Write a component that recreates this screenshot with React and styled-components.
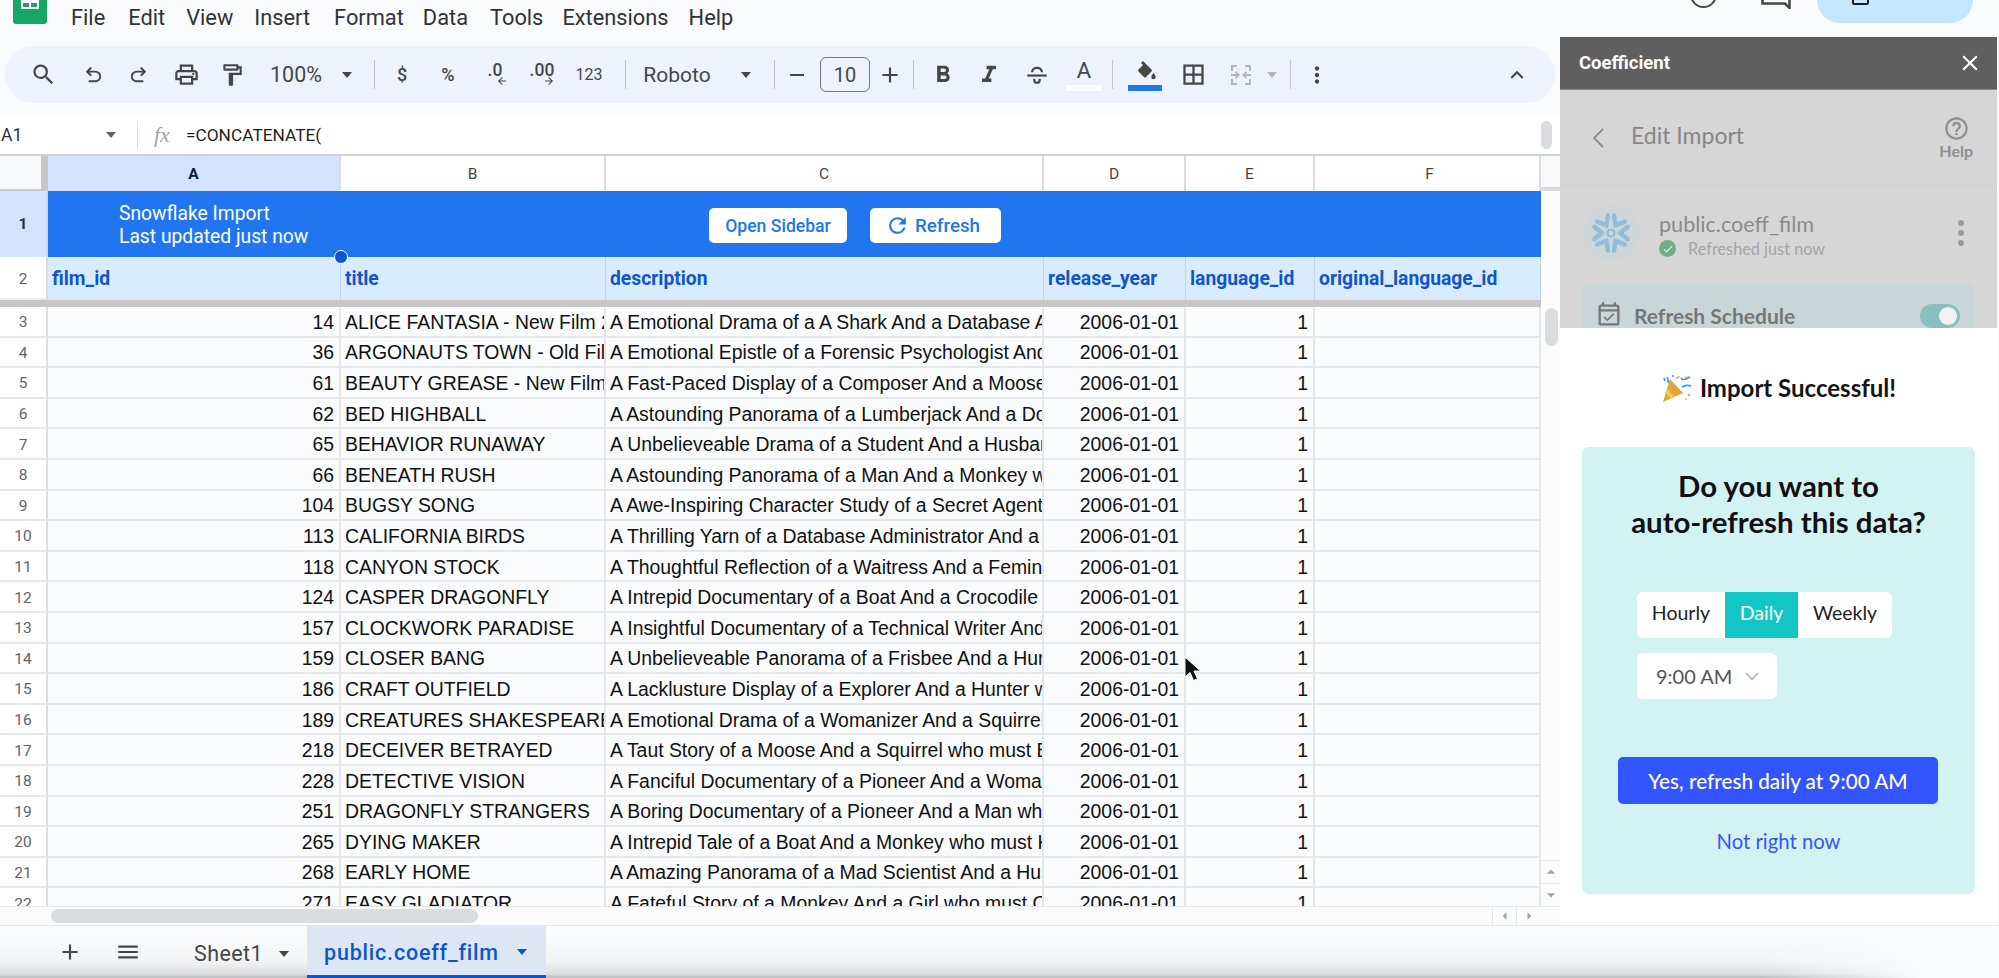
import React from 'react';
import styled, { createGlobalStyle } from 'styled-components';
import {
  MdSearch, MdOutlinePrint, MdOutlineFormatPaint, MdFormatBold, MdFormatItalic,
  MdBorderAll, MdMoreVert, MdKeyboardArrowUp, MdAdd, MdRemove, MdMenu, MdClose,
  MdRefresh, MdArrowDropDown, MdArrowDropUp, MdArrowLeft, MdArrowRight, MdOutlineHelpOutline,
  MdArrowForward, MdArrowBack, MdCheck, MdOutlineEventAvailable,
} from 'react-icons/md';

const GlobalStyle = createGlobalStyle`
  html, body { margin: 0; padding: 0; background: #f9fbfd; }
  * { box-sizing: border-box; }
`;

const rows = [
  [3, 14, 'ALICE FANTASIA - New Film 2006', 'A Emotional Drama of a A Shark And a Database Administrator who must'],
  [4, 36, 'ARGONAUTS TOWN - Old Film 2006', 'A Emotional Epistle of a Forensic Psychologist And a Butler who must'],
  [5, 61, 'BEAUTY GREASE - New Film 2006', 'A Fast-Paced Display of a Composer And a Moose who must Sink a Robot'],
  [6, 62, 'BED HIGHBALL', 'A Astounding Panorama of a Lumberjack And a Dog who must Redeem a'],
  [7, 65, 'BEHAVIOR RUNAWAY', 'A Unbelieveable Drama of a Student And a Husband who must Outrace a'],
  [8, 66, 'BENEATH RUSH', 'A Astounding Panorama of a Man And a Monkey who must Discover a'],
  [9, 104, 'BUGSY SONG', 'A Awe-Inspiring Character Study of a Secret Agent And a Boat who'],
  [10, 113, 'CALIFORNIA BIRDS', 'A Thrilling Yarn of a Database Administrator And a Robot who must'],
  [11, 118, 'CANYON STOCK', 'A Thoughtful Reflection of a Waitress And a Feminist who must Escape'],
  [12, 124, 'CASPER DRAGONFLY', 'A Intrepid Documentary of a Boat And a Crocodile who must Chase a'],
  [13, 157, 'CLOCKWORK PARADISE', 'A Insightful Documentary of a Technical Writer And a Feminist who'],
  [14, 159, 'CLOSER BANG', 'A Unbelieveable Panorama of a Frisbee And a Hunter who must Vanquish'],
  [15, 186, 'CRAFT OUTFIELD', 'A Lacklusture Display of a Explorer And a Hunter who must Succumb'],
  [16, 189, 'CREATURES SHAKESPEARE', 'A Emotional Drama of a Womanizer And a Squirrel who must Vanquish'],
  [17, 218, 'DECEIVER BETRAYED', 'A Taut Story of a Moose And a Squirrel who must Build a Husband'],
  [18, 228, 'DETECTIVE VISION', 'A Fanciful Documentary of a Pioneer And a Woman who must Redeem'],
  [19, 251, 'DRAGONFLY STRANGERS', 'A Boring Documentary of a Pioneer And a Man who must Vanquish'],
  [20, 265, 'DYING MAKER', 'A Intrepid Tale of a Boat And a Monkey who must Kill a Cat in'],
  [21, 268, 'EARLY HOME', 'A Amazing Panorama of a Mad Scientist And a Husband who must Meet'],
  [22, 271, 'EASY GLADIATOR', 'A Fateful Story of a Monkey And a Girl who must Overcome a Pastry'],
];

const columnLetters = ['A', 'B', 'C', 'D', 'E', 'F'];
const gridColumns = '48px 293px 265px 438px 142px 129px 226px';

const Page = styled.div`
  position: relative;
  width: 1999px;
  height: 978px;
  overflow: hidden;
  background: #f9fbfd;
  display: flex;
  flex-direction: column;
  font-family: Roboto, "Liberation Sans", sans-serif;
  color: #1f1f1f;
`;

const MenuBar = styled.div`
  height: 37px;
  flex: none;
  display: flex;
  align-items: flex-start;
  padding-left: 13px;
`;
const Logo = styled.svg`
  width: 34px;
  height: 24px;
  flex: none;
`;
const MenuList = styled.div`
  display: flex;
  margin-left: 24px;
  padding-top: 5px;
`;
const MenuItem = styled.span`
  font-size: 21.8px;
  line-height: 25px;
  color: #303336;
  margin-right: ${p => p.$mr}px;
`;
const TopRight = styled.div`
  margin-left: auto;
  display: flex;
  align-items: flex-start;
  height: 23px;
  padding-right: 26px;
`;
const ClippedRound = styled.div`
  width: 27px;
  height: 27px;
  margin-top: -19px;
  margin-right: 44px;
  border: 2.5px solid #444746;
  border-radius: 50%;
`;
const ClippedBubble = styled.svg`
  width: 30px;
  height: 9px;
  margin-right: 26px;
`;
const ShareButton = styled.div`
  width: 156px;
  height: 23px;
  border-radius: 0 0 24px 24px;
  background: #c2e7ff;
  overflow: hidden;
  display: flex;
  justify-content: center;
  font-size: 20px;
  font-weight: 500;
  line-height: 24px;
`;
const ShareInner = styled.div`
  display: flex;
  align-items: flex-end;
  gap: 18px;
  height: 24px;
  margin-top: -21px;
`;
const LockStub = styled.div`
  width: 17px;
  height: 16px;
  margin-bottom: -2px;
  border: 2.5px solid #1f1f1f;
  border-radius: 2px;
`;

const Main = styled.div`
  flex: 1;
  min-height: 0;
  display: flex;
`;
const LeftColumn = styled.div`
  width: 1560px;
  flex: none;
  display: flex;
  flex-direction: column;
  padding-top: 9px;
`;

const Toolbar = styled.div`
  height: 57px;
  flex: none;
  margin: 0 5px;
  padding: 0 20px 0 19px;
  border-radius: 29px;
  background: #edf2fc;
  display: flex;
  align-items: center;
  color: #444746;
`;
const Tool = styled.div`
  width: ${p => p.$w || 36}px;
  height: 36px;
  flex: none;
  margin-left: ${p => (p.$end ? 'auto' : `${p.$ml || 0}px`)};
  display: flex;
  flex-direction: column;
  align-items: center;
  justify-content: center;
  white-space: nowrap;
  font-size: ${p => p.$fs || 17}px;
  color: ${p => p.$color || '#444746'};
  font-weight: ${p => p.$fw || 400};
`;
const Divider = styled.div`
  width: 1px;
  height: 29px;
  flex: none;
  margin-left: ${p => p.$ml}px;
  background: #c7c7c7;
`;
const Caret = styled.div`
  width: 12px;
  height: 12px;
  flex: none;
  margin-left: ${p => p.$ml}px;
  display: flex;
  align-items: center;
  justify-content: center;
  &::before {
    content: '';
    border-left: 5px solid transparent;
    border-right: 5px solid transparent;
    border-top: 6px solid ${p => p.$color || '#444746'};
  }
`;
const SizeBox = styled.div`
  width: 50px;
  height: 35px;
  flex: none;
  margin-left: ${p => p.$ml}px;
  border: 1.5px solid #747775;
  border-radius: 6px;
  display: flex;
  align-items: center;
  justify-content: center;
  font-size: 20px;
  color: #444746;
`;
const DecimalWrap = styled.div`
  display: flex;
  flex-direction: column;
  align-items: center;
  line-height: 15px;
  font-size: 17.5px;
  font-weight: 500;
`;
const DecimalArrow = styled.div`
  height: 10px;
  margin-top: -2px;
  margin-left: 14px;
  display: flex;
  align-items: center;
`;
const Swatch = styled.div`
  width: 34px;
  height: 6px;
  margin-top: 2px;
  background: ${p => p.$color};
`;
const ToolIconStack = styled.div`
  height: 24px;
  display: flex;
  align-items: center;
`;
const LetterA = styled.span`
  font-size: 22px;
  line-height: 24px;
`;

const FormulaBar = styled.div`
  margin-top: 12px;
  height: 41px;
  flex: none;
  background: #fff;
  border-bottom: 2px solid #d0d2d4;
  display: flex;
  align-items: center;
  padding-right: 8px;
`;
const NameBox = styled.div`
  width: 105px;
  padding-left: 1px;
  font-size: 17.5px;
  color: #303336;
  flex: none;
`;
const FormulaSep = styled.div`
  width: 1px;
  height: 27px;
  margin-left: 20px;
  background: #dadce0;
`;
const FxLabel = styled.span`
  width: 48px;
  padding-left: 16px;
  font-family: "Liberation Serif", serif;
  font-style: italic;
  font-size: 22px;
  color: #a0a3a6;
  flex: none;
`;
const FormulaText = styled.span`
  font-size: 17.3px;
  color: #1f1f1f;
`;
const FormulaThumb = styled.div`
  margin-left: auto;
  width: 11px;
  height: 28px;
  border-radius: 6px;
  background: #dadce0;
`;

const SheetWrap = styled.div`
  flex: 1;
  min-height: 0;
  display: flex;
  border-right: 2px solid #e3e5e7;
`;
const Sheet = styled.div`
  width: 1541px;
  flex: none;
  display: flex;
  flex-direction: column;
`;
const GridRow = styled.div`
  display: grid;
  grid-template-columns: ${gridColumns};
  height: ${p => p.$h}px;
  flex: none;
`;
const Corner = styled.div`
  background: #f8f9fa;
  border-right: 7px solid #c7c7c7;
  border-bottom: 2px solid #c7c7c7;
`;
const ColHead = styled.div`
  display: flex;
  align-items: center;
  justify-content: center;
  font-size: 15.5px;
  background: ${p => (p.$active ? '#d3e3fd' : '#fff')};
  color: ${p => (p.$active ? '#0b1f3f' : '#444746')};
  font-weight: ${p => (p.$active ? 700 : 400)};
  border-right: 2px solid #dadce0;
  &:last-child { padding-left: 5px; }
`;
const RowHead = styled.div`
  display: flex;
  align-items: center;
  justify-content: center;
  padding-top: 2px;
  font-size: 15.5px;
  color: #5f6368;
  background: #fff;
  border-right: 2px solid #dadce0;
  border-bottom: 2px solid #e6e7e8;
`;
const BannerRow = styled.div`
  height: 66px;
  flex: none;
  display: flex;
  position: relative;
`;
const BannerHead = styled.div`
  width: 48px;
  flex: none;
  display: flex;
  align-items: center;
  justify-content: center;
  font-size: 15.5px;
  font-weight: 700;
  color: #1f2f45;
  background: #d3e3fd;
  border-right: 2px solid #c9d9f2;
`;
const BannerTitle = styled.div`
  width: 293px;
  flex: none;
  background: #2176f0;
  padding: 11px 0 0 71px;
  color: #fff;
  font-size: 19.3px;
  line-height: 23px;
  white-space: nowrap;
`;
const BannerActions = styled.div`
  flex: 1;
  background: #2176f0;
  display: flex;
  align-items: flex-start;
  padding: 17px 0 0 368px;
  gap: 23px;
`;
const BannerButton = styled.div`
  width: ${p => p.$w}px;
  height: 35px;
  padding-right: ${p => p.$pr || 0}px;
  border-radius: 5px;
  background: #fff;
  color: #2176f0;
  font-size: ${p => p.$fs}px;
  font-weight: 500;
  display: flex;
  align-items: center;
  justify-content: center;
  gap: 5px;
`;
const SelectDot = styled.div`
  position: absolute;
  left: 334px;
  top: 59px;
  width: 14px;
  height: 14px;
  border-radius: 50%;
  background: #0b57d0;
  border: 1.5px solid #fff;
`;
const HeaderCell = styled.div`
  background: #d9ecfd;
  color: #1155cc;
  font-size: 19.3px;
  font-weight: 700;
  padding-left: 4px;
  display: flex;
  align-items: center;
  border-right: 1.5px solid #bfd7ec;
  white-space: nowrap;
  overflow: hidden;
`;
const FreezeBar = styled.div`
  height: 7px;
  flex: none;
  background: #c7c7c7;
`;
const RowsClip = styled.div`
  flex: 1;
  min-height: 0;
  overflow: hidden;
`;
const Cell = styled.div`
  font-family: "Liberation Sans", Arial, sans-serif;
  font-size: 19.4px;
  color: #111;
  white-space: nowrap;
  overflow: hidden;
  display: flex;
  align-items: center;
  justify-content: ${p => (p.$right ? 'flex-end' : 'flex-start')};
  padding: ${p => (p.$right ? '2px 5px 0 0' : '2px 0 0 4px')};
  border-right: 2px solid #e6e7e8;
  border-bottom: 2px solid #e6e7e8;
`;
const HScroll = styled.div`
  height: 19px;
  flex: none;
  background: #fcfcfd;
  border-top: 1px solid #e3e5e7;
  display: flex;
  align-items: center;
  padding-left: 51px;
`;
const HThumb = styled.div`
  width: 427px;
  height: 14px;
  border-radius: 7px;
  background: #dadce0;
`;
const HArrows = styled.div`
  margin-left: auto;
  margin-right: 1px;
  display: flex;
  height: 100%;
  color: #a0a3a6;
`;
const ScrollBtn = styled.div`
  width: 24px;
  display: flex;
  align-items: center;
  justify-content: center;
  border-left: 1px solid #e3e5e7;
`;
const VScroll = styled.div`
  flex: 1;
  display: flex;
  flex-direction: column;
  align-items: center;
  background: #fcfcfd;
  color: #a0a3a6;
`;
const VHead = styled.div`
  height: 35px;
  width: 100%;
  flex: none;
  background: #f8f9fa;
  border-bottom: 4px solid #d8dadc;
`;
const VThumb = styled.div`
  width: 13px;
  height: 38px;
  margin-top: 117px;
  flex: none;
  border-radius: 7px;
  background: #dadce0;
`;
const VArrow = styled.div`
  width: 100%;
  height: 23px;
  flex: none;
  display: flex;
  align-items: center;
  justify-content: center;
  border-top: 1px solid #e3e5e7;
  margin-top: ${p => (p.$auto ? 'auto' : '0')};
`;
const VFoot = styled.div`
  height: 19px;
  width: 100%;
  flex: none;
  border-top: 1px solid #e3e5e7;
`;

const Panel = styled.div`
  width: 437px;
  flex: none;
  display: flex;
  flex-direction: column;
  background: #fff;
`;
const PanelHeader = styled.div`
  height: 53px;
  flex: none;
  background: #5f5f5f;
  border-bottom: 1px solid #888;
  display: flex;
  align-items: center;
  justify-content: space-between;
  padding: 0 14px 0 19px;
  color: #fff;
  font-size: 18.5px;
  font-weight: 700;
`;
const DimmedArea = styled.div`
  height: 238px;
  flex: none;
  overflow: hidden;
  background: #d6d6d6;
  font-family: Lato, "Open Sans", sans-serif;
  color: #888;
`;
const EditRow = styled.div`
  height: 96px;
  display: flex;
  align-items: center;
  padding: 0 24px 0 32px;
  border-bottom: 1px dotted #c9c9c9;
`;
const EditTitle = styled.span`
  margin-left: 27px;
  margin-top: -6px;
  font-size: 23px;
  color: #868686;
`;
const HelpBox = styled.div`
  margin-left: auto;
  display: flex;
  flex-direction: column;
  align-items: center;
  font-size: 16px;
  font-weight: 700;
  color: #8f8f8f;
  line-height: 18px;
`;
const SourceRow = styled.div`
  height: 90px;
  display: flex;
  align-items: center;
  padding: 3px 33px 0 23px;
`;
const Avatar = styled.div`
  width: 56px;
  height: 56px;
  border-radius: 50%;
  background: #cfd6d9;
  display: flex;
  align-items: center;
  justify-content: center;
  flex: none;
`;
const SourceText = styled.div`
  margin-left: 20px;
  margin-top: 5px;
  display: flex;
  flex-direction: column;
`;
const SourceName = styled.span`
  font-size: 21.6px;
  line-height: 27px;
  color: #8a8a8a;
`;
const SourceStatus = styled.div`
  display: flex;
  align-items: center;
  gap: 12px;
  font-size: 16.3px;
  line-height: 21px;
  color: #a4a4a4;
`;
const StatusDot = styled.div`
  width: 17px;
  height: 17px;
  border-radius: 50%;
  background: #72ad88;
  color: #e6efe8;
  display: flex;
  align-items: center;
  justify-content: center;
`;
const DimDots = styled.div`
  margin-left: auto;
  display: flex;
  flex-direction: column;
  gap: 4px;
`;
const DimDot = styled.div`
  width: 6px;
  height: 6px;
  border-radius: 50%;
  background: #9a9a9a;
`;
const ScheduleCard = styled.div`
  margin: 8px 22px 0;
  height: 70px;
  border-radius: 8px;
  background: #c9d6d8;
  display: flex;
  align-items: flex-start;
  padding: 17px 15px 0 13px;
`;
const ScheduleLabel = styled.span`
  margin-left: 11px;
  margin-top: 2px;
  font-size: 21px;
  font-weight: 700;
  line-height: 25px;
  color: #777;
`;
const DimToggle = styled.div`
  margin-left: auto;
  margin-top: 3px;
  width: 40px;
  height: 24px;
  border-radius: 12px;
  background: #8abfc0;
  display: flex;
  align-items: center;
  justify-content: flex-end;
  padding-right: 3px;
`;
const DimKnob = styled.div`
  width: 18px;
  height: 18px;
  border-radius: 50%;
  background: #f2f2f2;
`;

const PanelBody = styled.div`
  flex: 1;
  min-height: 0;
  display: flex;
  flex-direction: column;
  align-items: center;
  font-family: Lato, "Open Sans", sans-serif;
`;
const SuccessTitle = styled.div`
  height: 119px;
  flex: none;
  display: flex;
  align-items: center;
  gap: 7px;
  font-size: 24px;
  font-weight: 700;
  color: #151515;
`;
const RefreshCard = styled.div`
  width: 393px;
  height: 447px;
  flex: none;
  border-radius: 7px;
  background: #d3f2f2;
  display: flex;
  flex-direction: column;
  align-items: center;
  padding-top: 21px;
`;
const CardHeading = styled.div`
  font-size: 29.4px;
  font-weight: 700;
  line-height: 36px;
  text-align: center;
  color: #111;
`;
const OptionsBlock = styled.div`
  align-self: flex-start;
  margin: 52px 0 0 55px;
  display: flex;
  flex-direction: column;
  gap: 15px;
`;
const Segments = styled.div`
  width: 255px;
  height: 46px;
  border-radius: 6px;
  background: #fff;
  overflow: hidden;
  display: grid;
  grid-template-columns: 88px 73px 94px;
`;
const Segment = styled.div`
  display: flex;
  align-items: center;
  justify-content: center;
  font-size: 19.5px;
  padding-bottom: 5px;
  color: ${p => (p.$active ? '#fff' : '#222')};
  background: ${p => (p.$active ? '#12c6c6' : 'transparent')};
`;
const TimeSelect = styled.div`
  width: 140px;
  height: 46px;
  border-radius: 6px;
  background: #fff;
  display: flex;
  align-items: center;
  padding-left: 19px;
  gap: 13px;
  font-size: 20px;
  color: #555;
`;
const PrimaryButton = styled.div`
  margin: 58px 0 0 36px;
  width: 320px;
  height: 47px;
  flex: none;
  align-self: flex-start;
  border-radius: 5px;
  background: #3355ff;
  color: #fff;
  font-size: 20.7px;
  font-weight: 500;
  display: flex;
  align-items: center;
  justify-content: center;
`;
const TextLink = styled.div`
  margin-top: 24px;
  font-size: 20.3px;
  line-height: 26px;
  color: #3355ff;
`;

const TabBar = styled.div`
  height: 53px;
  flex: none;
  border-top: 1px solid #e3e5e7;
  background:
    linear-gradient(to right, rgba(249, 251, 253, 0) 88%, #f9fbfd 96%),
    linear-gradient(#f9fbfd 25%, #f1f2f4 70%, #dcdddf 92%, #b9babc 100%);
  display: flex;
  align-items: stretch;
  color: #444746;
`;
const TabIcon = styled.div`
  width: 36px;
  flex: none;
  margin-left: ${p => p.$ml}px;
  display: flex;
  align-items: center;
  justify-content: center;
`;
const Tab = styled.div`
  display: flex;
  align-items: center;
  flex: none;
  width: ${p => p.$w}px;
  margin-left: ${p => p.$ml}px;
  padding-left: ${p => p.$pl}px;
  padding-top: 3px;
  font-size: 21.5px;
  letter-spacing: ${p => (p.$active ? '0.8px' : '0.4px')};
  font-weight: ${p => (p.$active ? 500 : 400)};
  color: ${p => (p.$active ? '#0b57d0' : '#444746')};
  background: ${p => (p.$active ? '#dce6f5' : 'transparent')};
  border-bottom: ${p => (p.$active ? '3px solid #0b57d0' : 'none')};
`;
const Pointer = styled.svg`
  position: absolute;
  left: 1184px;
  top: 656px;
  width: 18px;
  height: 28px;
`;

const LogoMark = () => (
  <Logo viewBox="0 0 34 24">
    <path d="M0 0H34V21a3 3 0 0 1-3 3H3a3 3 0 0 1-3-3Z" fill="#16a765" />
    <path d="M8 0H26V9H8Z" fill="#fff" />
    <path d="M10 3H16V7H10ZM18 3H24V7H18Z" fill="#16a765" />
  </Logo>
);

const UndoIcon = ({ flip }) => (
  <svg width="23" height="23" viewBox="0 0 24 24" fill="#444746" transform={flip ? 'scale(-1 1)' : undefined}>
    <path d="M8 20v-2h7q1.700 0 2.850-1.150T19 14q0-1.700-1.150-2.850T15 10H8.800l2.600 2.600L10 14 5 9l5-5 1.400 1.400L8.800 8H15q2.500 0 4.250 1.750T21 14q0 2.500-1.750 4.250T15 20H8Z" />
  </svg>
);

const StrikeIcon = () => (
  <svg width="26" height="26" viewBox="0 0 24 24" fill="none" stroke="#444746" strokeWidth="2">
    <path d="M7.500 9.500C7.500 4 16.500 4 16.500 9.500" />
    <path d="M3 12.500h18" />
    <path d="M9.500 15.500v1c0 3.500 5 3.500 5 0v-1" />
  </svg>
);

const FillIcon = () => (
  <svg width="24" height="22" viewBox="0 0 24 22">
    <path d="M10 1l2 2 6.500 6.500a1.400 1.400 0 0 1 0 2L13 17a1.400 1.400 0 0 1-2 0l-5.500-5.500a1.400 1.400 0 0 1 0-2L10 5 8 3Z" fill="#444746" />
    <path d="M20.500 13s-2.200 2.400-2.200 4a2.200 2.200 0 0 0 4.400 0c0-1.600-2.200-4-2.200-4Z" fill="#444746" />
  </svg>
);

const MergeIcon = () => (
  <svg width="24" height="24" viewBox="0 0 24 24" fill="none" stroke="#b4b6b6" strokeWidth="2">
    <path d="M8 3H3v5M16 3h5v5M8 21H3v-5M16 21h5v-5" />
    <path d="M2 12h7M6.500 9l3 3-3 3M22 12h-7M17.500 9l-3 3 3 3" />
  </svg>
);

const ThinChevron = ({ w, h, d, color }) => (
  <svg width={w} height={h} viewBox={`0 0 ${w} ${h}`} fill="none" stroke={color} strokeWidth="1.800">
    <path d={d} />
  </svg>
);

const SnowflakeIcon = () => (
  <svg width="46" height="46" viewBox="0 0 48 48" fill="none" stroke="#8fbedb" strokeLinecap="round">
    {[30, 90, 150, 210, 270, 330].map(angle => (
      <path key={angle} d="M17.500 6.500 24 14.500 30.500 6.500" strokeWidth="4.600" strokeLinejoin="miter" transform={`rotate(${angle} 24 24)`} />
    ))}
    <circle cx="24" cy="24" r="3.600" strokeWidth="2.400" />
  </svg>
);

const PartyPopper = () => (
  <svg width="32" height="30" viewBox="0 0 32 30">
    <path d="M9 6l13 14L2 29Z" fill="#e0a63c" />
    <path d="M6 16l7 8-3 1.500-6-6Z" fill="#f3cc55" />
    <path d="M7 10c1-2 0-4-1-6M3 5l1 3M20 5c2 3 6 1 9-1M21 14c3-2 6-2 9-1" fill="none" stroke="#3f97e0" strokeWidth="1.600" />
    <path d="M15 6c1-2 3-1 3-3M24 4c1 1 3 1 4-1" fill="none" stroke="#ef8fa6" strokeWidth="1.600" />
    <circle cx="28" cy="22" r="1.300" fill="#ef8fa6" />
    <circle cx="25" cy="26" r="1" fill="#f3cc55" />
    <circle cx="12" cy="3" r="1.100" fill="#3f97e0" />
  </svg>
);

const App = () => (
  <Page>
    <GlobalStyle />
    <MenuBar>
      <LogoMark />
      <MenuList>
        <MenuItem $mr={23}>File</MenuItem>
        <MenuItem $mr={21}>Edit</MenuItem>
        <MenuItem $mr={21}>View</MenuItem>
        <MenuItem $mr={24}>Insert</MenuItem>
        <MenuItem $mr={19}>Format</MenuItem>
        <MenuItem $mr={22}>Data</MenuItem>
        <MenuItem $mr={19}>Tools</MenuItem>
        <MenuItem $mr={20}>Extensions</MenuItem>
        <MenuItem $mr={0}>Help</MenuItem>
      </MenuList>
      <TopRight>
        <ClippedRound />
        <ClippedBubble viewBox="0 0 30 9" fill="none" stroke="#444746" strokeWidth="2.500">
          <path d="M1.500 0V3.500H24L28.500 8V0" />
        </ClippedBubble>
        <ShareButton>
          <ShareInner>
            <LockStub />
            <span>Share</span>
          </ShareInner>
        </ShareButton>
      </TopRight>
    </MenuBar>
    <Main>
      <LeftColumn>
        <Toolbar>
          <Tool $ml={1}><MdSearch size={27} /></Tool>
          <Tool $ml={13}><UndoIcon /></Tool>
          <Tool $ml={11}><UndoIcon flip /></Tool>
          <Tool $ml={11}><MdOutlinePrint size={27} /></Tool>
          <Tool $ml={10}><MdOutlineFormatPaint size={26} /></Tool>
          <Tool $ml={19} $w={54} $fs={21.5}>100%</Tool>
          <Caret $ml={18} />
          <Divider $ml={21} />
          <Tool $ml={9} $fs={18} $fw={500}>$</Tool>
          <Tool $ml={10} $fs={18} $fw={500}>%</Tool>
          <Tool $ml={11}>
            <DecimalWrap>.0<DecimalArrow><MdArrowBack size={12} /></DecimalArrow></DecimalWrap>
          </Tool>
          <Tool $ml={11}>
            <DecimalWrap>.00<DecimalArrow><MdArrowForward size={12} /></DecimalArrow></DecimalWrap>
          </Tool>
          <Tool $ml={11} $fs={16}>123</Tool>
          <Divider $ml={18} />
          <Tool $ml={17} $w={68} $fs={21}>Roboto</Tool>
          <Caret $ml={29} />
          <Divider $ml={22} />
          <Tool $ml={4}><MdRemove size={24} /></Tool>
          <SizeBox $ml={5}>10</SizeBox>
          <Tool $ml={2}><MdAdd size={26} /></Tool>
          <Divider $ml={5} />
          <Tool $ml={11}><MdFormatBold size={28} /></Tool>
          <Tool $ml={10}><MdFormatItalic size={28} /></Tool>
          <Tool $ml={12}><StrikeIcon /></Tool>
          <Tool $ml={11}>
            <ToolIconStack><LetterA>A</LetterA></ToolIconStack>
            <Swatch $color="#fff" />
          </Tool>
          <Divider $ml={10} />
          <Tool $ml={14}>
            <ToolIconStack><FillIcon /></ToolIconStack>
            <Swatch $color="#1f76ef" />
          </Tool>
          <Tool $ml={12}><MdBorderAll size={27} /></Tool>
          <Tool $ml={12}><MergeIcon /></Tool>
          <Caret $ml={7} $color="#b4b6b6" />
          <Divider $ml={12} />
          <Tool $ml={8}><MdMoreVert size={26} /></Tool>
          <Tool $end><MdKeyboardArrowUp size={26} /></Tool>
        </Toolbar>
        <FormulaBar>
          <NameBox>A1</NameBox>
          <Caret $ml={0} $color="#5f6368" />
          <FormulaSep />
          <FxLabel>fx</FxLabel>
          <FormulaText>=CONCATENATE(</FormulaText>
          <FormulaThumb />
        </FormulaBar>
        <SheetWrap>
          <Sheet>
            <GridRow $h={35}>
              <Corner />
              {columnLetters.map((letter, i) => (
                <ColHead key={letter} $active={i === 0}>{letter}</ColHead>
              ))}
            </GridRow>
            <BannerRow>
              <BannerHead>1</BannerHead>
              <BannerTitle>Snowflake Import<br />Last updated just now</BannerTitle>
              <BannerActions>
                <BannerButton $w={138} $fs={17.6}>Open Sidebar</BannerButton>
                <BannerButton $w={131} $fs={18.8} $pr={6}><MdRefresh size={25} />Refresh</BannerButton>
              </BannerActions>
              <SelectDot />
            </BannerRow>
            <GridRow $h={43}>
              <RowHead>2</RowHead>
              <HeaderCell>film_id</HeaderCell>
              <HeaderCell>title</HeaderCell>
              <HeaderCell>description</HeaderCell>
              <HeaderCell>release_year</HeaderCell>
              <HeaderCell>language_id</HeaderCell>
              <HeaderCell>original_language_id</HeaderCell>
            </GridRow>
            <FreezeBar />
            <RowsClip>
              {rows.map(([n, id, title, desc]) => (
                <GridRow key={n} $h={30.6}>
                  <RowHead>{n}</RowHead>
                  <Cell $right>{id}</Cell>
                  <Cell>{title}</Cell>
                  <Cell>{desc}</Cell>
                  <Cell $right>2006-01-01</Cell>
                  <Cell $right>1</Cell>
                  <Cell />
                </GridRow>
              ))}
            </RowsClip>
            <HScroll>
              <HThumb />
              <HArrows>
                <ScrollBtn><MdArrowLeft size={18} /></ScrollBtn>
                <ScrollBtn><MdArrowRight size={18} /></ScrollBtn>
              </HArrows>
            </HScroll>
          </Sheet>
          <VScroll>
            <VHead />
            <VThumb />
            <VArrow $auto><MdArrowDropUp size={20} /></VArrow>
            <VArrow><MdArrowDropDown size={20} /></VArrow>
            <VFoot />
          </VScroll>
        </SheetWrap>
      </LeftColumn>
      <Panel>
        <PanelHeader>
          Coefficient
          <MdClose size={26} />
        </PanelHeader>
        <DimmedArea>
          <EditRow>
            <ThinChevron w={12} h={24} d="M11 3 2 12l9 9" color="#8a8a8a" />
            <EditTitle>Edit Import</EditTitle>
            <HelpBox>
              <MdOutlineHelpOutline size={27} />
              Help
            </HelpBox>
          </EditRow>
          <SourceRow>
            <Avatar><SnowflakeIcon /></Avatar>
            <SourceText>
              <SourceName>public.coeff_film</SourceName>
              <SourceStatus>
                <StatusDot><MdCheck size={12} /></StatusDot>
                Refreshed just now
              </SourceStatus>
            </SourceText>
            <DimDots><DimDot /><DimDot /><DimDot /></DimDots>
          </SourceRow>
          <ScheduleCard>
            <MdOutlineEventAvailable size={28} color="#777" />
            <ScheduleLabel>Refresh Schedule</ScheduleLabel>
            <DimToggle><DimKnob /></DimToggle>
          </ScheduleCard>
        </DimmedArea>
        <PanelBody>
          <SuccessTitle><PartyPopper />Import Successful!</SuccessTitle>
          <RefreshCard>
            <CardHeading>Do you want to<br />auto-refresh this data?</CardHeading>
            <OptionsBlock>
              <Segments>
                <Segment>Hourly</Segment>
                <Segment $active>Daily</Segment>
                <Segment>Weekly</Segment>
              </Segments>
              <TimeSelect>9:00 AM <ThinChevron w={14} h={9} d="M1 1l6 6.500L13 1" color="#b5b5b5" /></TimeSelect>
            </OptionsBlock>
            <PrimaryButton>Yes, refresh daily at 9:00 AM</PrimaryButton>
            <TextLink>Not right now</TextLink>
          </RefreshCard>
        </PanelBody>
      </Panel>
    </Main>
    <TabBar>
      <TabIcon $ml={52}><MdAdd size={26} /></TabIcon>
      <TabIcon $ml={22}><MdMenu size={26} /></TabIcon>
      <Tab $w={141} $ml={20} $pl={28}>Sheet1<Caret $ml={15} /></Tab>
      <Tab $active $w={239} $ml={0} $pl={17}>public.coeff_film<Caret $ml={17} $color="#0b57d0" /></Tab>
    </TabBar>
    <Pointer viewBox="0 0 18 28">
      <path d="M1 1v20l5-4.500 3.500 8 4-1.800-3.500-7.700h6.500Z" fill="#111" stroke="#fff" strokeWidth="1" />
    </Pointer>
  </Page>
);

export default App;
